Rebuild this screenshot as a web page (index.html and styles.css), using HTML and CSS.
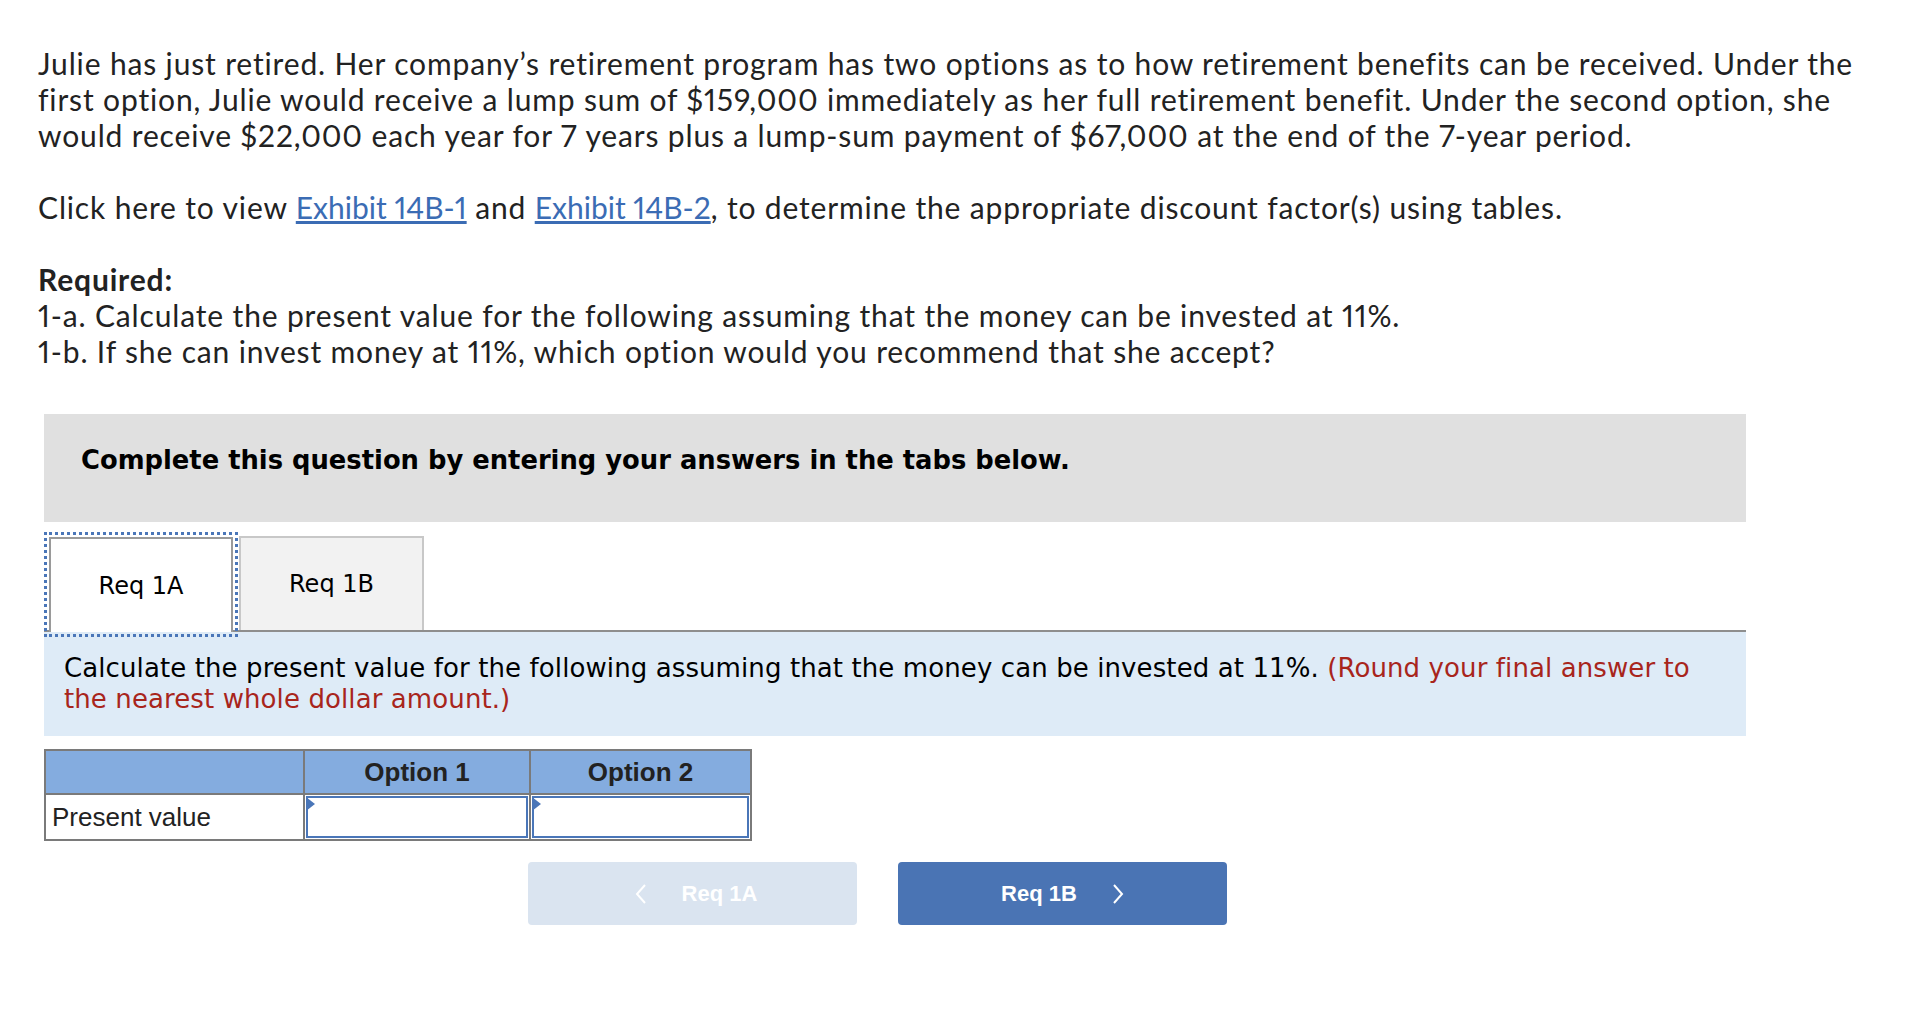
FILE: index.html
```html
<!DOCTYPE html>
<html lang="en">
<head>
<meta charset="utf-8">
<title>Julie retirement question</title>
<link rel="stylesheet" href="styles.css">
</head>
<body>
<div class="page">
  <div class="question">
    <p>Julie has just retired. Her company’s retirement program has two options as to how retirement benefits can be received. Under the<br>first option, Julie would receive a lump sum of $159,000 immediately as her full retirement benefit. Under the second option, she<br>would receive $22,000 each year for 7 years plus a lump-sum payment of $67,000 at the end of the 7-year period.</p>
    <p>Click here to view <a href="#">Exhibit 14B-1</a> and <a href="#">Exhibit 14B-2</a>, to determine the appropriate discount factor(s) using tables.</p>
    <p><strong>Required:</strong><br>1-a. Calculate the present value for the following assuming that the money can be invested at 11%.<br>1-b. If she can invest money at 11%, which option would you recommend that she accept?</p>
  </div>

  <div class="widget">
    <div class="instructions">Complete this question by entering your answers in the tabs below.</div>

    <div class="tabs">
      <div class="tab active">Req 1A</div>
      <div class="tab">Req 1B</div>
    </div>

    <div class="panel">Calculate the present value for the following assuming that the money can be invested at 11%. <span class="hint">(Round your final answer to<br>the nearest whole dollar amount.)</span></div>

    <table class="grid">
      <colgroup>
        <col class="c-label">
        <col class="c-opt1">
        <col class="c-opt2">
      </colgroup>
      <thead>
        <tr><th></th><th>Option 1</th><th>Option 2</th></tr>
      </thead>
      <tbody>
        <tr>
          <td class="label">Present value</td>
          <td class="input"><div class="field"></div></td>
          <td class="input"><div class="field"></div></td>
        </tr>
      </tbody>
    </table>

    <div class="nav">
      <button class="btn prev" type="button" disabled>
        <svg class="chev" width="12" height="20" viewBox="0 0 12 20"><polyline points="10,1 2,10 10,19" fill="none" stroke="#fff" stroke-width="2"/></svg>
        <span>Req 1A</span>
      </button>
      <button class="btn next" type="button">
        <span>Req 1B</span>
        <svg class="chev" width="12" height="20" viewBox="0 0 12 20"><polyline points="2,1 10,10 2,19" fill="none" stroke="#fff" stroke-width="2"/></svg>
      </button>
    </div>
  </div>
</div>
</body>
</html>
```

FILE: styles.css
```css
body {
  margin: 0;
  background: #ffffff;
  color: #222222;
}

.page {
  padding-top: 45px;
}

.question {
  margin-left: 38px;
  font-family: Lato, "Open Sans", sans-serif;
  font-size: 30px;
  line-height: 36px;
  letter-spacing: 0.85px;
  font-variant-ligatures: none;
  font-variant-numeric: proportional-nums;
  color: #222222;
}

.question p {
  margin: 0 0 36px;
}

.question p:last-child {
  margin-bottom: 0;
}

.question a {
  color: #3b6cb4;
  text-decoration: underline;
  letter-spacing: 0;
}

.question strong {
  font-weight: bold;
}

.widget {
  margin: 45px 0 0 44px;
  width: 1702px;
}

.instructions {
  box-sizing: border-box;
  height: 108px;
  padding: 31px 37px 0;
  background: #e0e0e0;
  font-family: "DejaVu Sans", Verdana, sans-serif;
  font-weight: bold;
  font-size: 25.8px;
  color: #000000;
}

.tabs {
  display: flex;
  align-items: flex-end;
  gap: 6px;
  margin-top: 14px;
  padding-left: 5px;
  font-family: "DejaVu Sans", Verdana, sans-serif;
  font-size: 24px;
  color: #000000;
}

.tab {
  box-sizing: border-box;
  width: 185px;
  height: 94px;
  display: flex;
  align-items: center;
  justify-content: center;
  background: #f2f2f2;
  border: 2px solid #c8c8c8;
  border-bottom: 0;
}

.tab.active {
  position: relative;
  z-index: 1;
  width: 184px;
  height: 95px;
  margin-bottom: -2px;
  background: #ffffff;
  border: 2px solid #9a9a9a;
  border-bottom: 0;
  outline: 3px dotted #4a76b8;
  outline-offset: 2px;
}

.panel {
  border-top: 2px solid #8e8e8e;
  background: #deebf7;
  padding: 21px 20px 21px;
  font-family: "DejaVu Sans", Verdana, sans-serif;
  font-size: 26px;
  line-height: 31px;
  letter-spacing: 0.1px;
  color: #000000;
}

.hint {
  color: #a8251c;
}

.grid {
  margin-top: 13px;
  border-collapse: collapse;
  font-family: "Liberation Sans", Arial, sans-serif;
  font-size: 26px;
  color: #222222;
}

.c-label { width: 259px; }
.c-opt1 { width: 226px; }
.c-opt2 { width: 221px; }

.grid th,
.grid td {
  border: 2px solid #7a7a7a;
  height: 44px;
  padding: 0;
  box-sizing: border-box;
}

.grid th {
  background: #84acdf;
  font-weight: bold;
  text-align: center;
}

.grid td.label {
  padding-left: 6px;
  text-align: left;
  background: #ffffff;
}

.grid td.input {
  padding: 1px;
  background: #ffffff;
}

.field {
  position: relative;
  box-sizing: border-box;
  height: 42px;
  border: 2px solid #4a76b8;
  background: #ffffff;
}

.field::before {
  content: "";
  position: absolute;
  left: -2px;
  top: -1px;
  border-left: 9px solid #4a76b8;
  border-top: 7px solid transparent;
  border-bottom: 7px solid transparent;
}

.nav {
  display: flex;
  gap: 41px;
  margin-top: 21px;
  padding-left: 484px;
}

.btn {
  width: 329px;
  height: 63px;
  border: 0;
  border-radius: 4px;
  display: flex;
  align-items: center;
  justify-content: center;
  gap: 35px;
  padding: 0;
  font-family: "Liberation Sans", Arial, sans-serif;
  font-weight: bold;
  font-size: 22px;
  color: #ffffff;
  cursor: pointer;
}

.btn.prev {
  padding-left: 7px;
  background: #dae4f0;
  cursor: default;
}

.btn.next {
  background: #4a74b4;
}

.chev {
  display: block;
}
```
